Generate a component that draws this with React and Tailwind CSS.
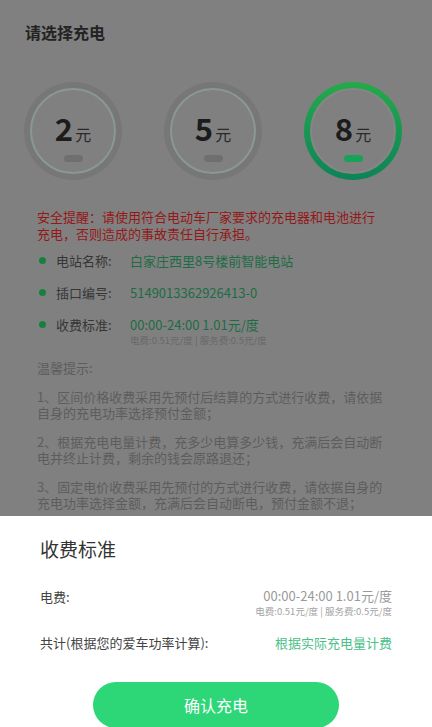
import React from "react";

const font = { fontFamily: '"Noto Sans CJK SC", "Noto Sans", sans-serif' };

function Coin({ value, selected }) {
  return (
    <div
      className={
        "w-[98px] h-[98px] rounded-full p-[6px] " +
        (selected
          ? "bg-gradient-to-b from-[#24aa48] to-[#0d8358]"
          : "bg-[#777777]")
      }
    >
      <div
        className={
          "w-full h-full rounded-full border-2 bg-[#808080] flex flex-col items-center justify-center " +
          (selected ? "border-[#868686]" : "border-[#8a9893]")
        }
      >
        <div className="flex items-baseline mt-[12px]">
          <span className="text-[31px] leading-none font-bold text-[#1c1c1c]">{value}</span>
          <span className="text-[16px] leading-none text-[#2a2a2a] ml-[2px]">元</span>
        </div>
        <div
          className={
            "mt-[12px] w-[19px] h-[7px] rounded-full " +
            (selected ? "bg-[#17a257]" : "bg-[#6f6f6f]")
          }
        />
      </div>
    </div>
  );
}

function Row({ label, value, sub }) {
  return (
    <div className="flex items-start">
      <div className="w-[7px] h-[7px] rounded-full bg-[#16803f] mt-[6px] ml-[2px]" />
      <div className="ml-[10px] w-[74px] text-[13px] leading-[19px] text-[#363636]">{label}</div>
      <div className="flex flex-col">
        <div className="text-[13px] leading-[19px] text-[#1d6c45]">{value}</div>
        {sub && <div className="text-[9.5px] leading-[12px] text-[#686868]">{sub}</div>}
      </div>
    </div>
  );
}

export default function App() {
  return (
    <div style={font} className="w-[432px] h-[727px] overflow-hidden bg-white flex flex-col">
      <div className="h-[516px] shrink-0 bg-[#808080] overflow-hidden">
        <div className="pl-[25px] pt-[21px] text-[16px] leading-[22px] font-semibold text-[#232323]">
          请选择充电
        </div>
        <div className="flex justify-between pl-[24px] pr-[30px] mt-[39px]">
          <Coin value="2" />
          <Coin value="5" />
          <Coin value="8" selected />
        </div>
        <div className="pl-[37px] pr-[50px] mt-[28px] text-[13px] leading-[17px] text-[#951818]">
          安全提醒：请使用符合电动车厂家要求的充电器和电池进行充电，否则造成的事故责任自行承担。
        </div>
        <div className="pl-[37px] mt-[9px] flex flex-col gap-[13px]">
          <Row label="电站名称:" value="白家庄西里8号楼前智能电站" />
          <Row label="插口编号:" value="5149013362926413-0" />
          <Row label="收费标准:" value="00:00-24:00 1.01元/度" sub="电费:0.51元/度 | 服务费:0.5元/度" />
        </div>
        <div className="px-[37px] mt-[14px] text-[13px] leading-[16px] text-[#5d5d5d] flex flex-col gap-[13px]">
          <div>温馨提示:</div>
          <div>1、区间价格收费采用先预付后结算的方式进行收费，请依据自身的充电功率选择预付金额；</div>
          <div>2、根据充电电量计费，充多少电算多少钱，充满后会自动断电并终止计费，剩余的钱会原路退还；</div>
          <div>3、固定电价收费采用先预付的方式进行收费，请依据自身的充电功率选择金额，充满后会自动断电，预付金额不退；</div>
        </div>
      </div>
      <div className="flex-1 px-[40px]">
        <div className="pt-[20px] text-[19px] leading-[26px] text-[#333333]">收费标准</div>
        <div className="mt-[25px] flex justify-between items-start">
          <div className="text-[13px] leading-[18px] text-[#444444] mt-[1px]">电费:</div>
          <div className="flex flex-col items-end">
            <div className="text-[13px] leading-[18px] text-[#9a9a9a]">00:00-24:00 1.01元/度</div>
            <div className="text-[9.5px] leading-[12px] text-[#a3a3a3]">电费:0.51元/度 | 服务费:0.5元/度</div>
          </div>
        </div>
        <div className="mt-[17px] flex justify-between items-center">
          <div className="text-[13px] leading-[18px] text-[#444444]">共计(根据您的爱车功率计算):</div>
          <div className="text-[13px] leading-[18px] text-[#4cc08a]">根据实际充电量计费</div>
        </div>
        <div className="mt-[30px] flex justify-center">
          <div className="w-[246px] h-[46px] rounded-full bg-[#2dd676] flex items-center justify-center text-white text-[16px]">
            确认充电
          </div>
        </div>
      </div>
    </div>
  );
}
